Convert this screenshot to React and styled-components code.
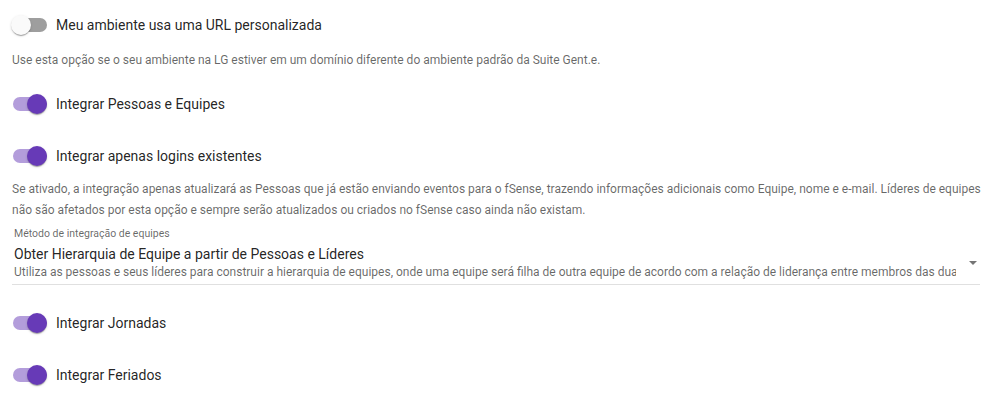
import React from 'react'
import styled, {createGlobalStyle} from 'styled-components'

const Global = createGlobalStyle`
    body {
        margin: 0;
        background: #fff;
        font-family: Roboto, "Noto Sans", sans-serif;
        color: rgba(0,0,0,0.87);
    }
`;

const Page = styled.div`
    width: 998px;
    padding: 0 12px;
    box-sizing: border-box;
    display: flex;
    flex-direction: column;
`;

const Row = styled.label`
    display: flex;
    align-items: center;
    height: 38px;
    margin-top: ${props => props.top || 0}px;
`;

const Track = styled.span`
    position: relative;
    width: 34px;
    height: 14px;
    border-radius: 7px;
    margin-left: 1px;
    background: ${props => props.on ? '#b39ddb' : '#9e9e9e'};
    flex-shrink: 0;
`;

const Thumb = styled.span`
    position: absolute;
    top: -3px;
    left: ${props => props.on ? '14px' : '-2px'};
    width: 20px;
    height: 20px;
    border-radius: 50%;
    background: ${props => props.on ? '#673ab7' : '#fafafa'};
    box-shadow: 0 2px 1px -1px rgba(0,0,0,0.2), 0 1px 1px 0 rgba(0,0,0,0.14), 0 1px 3px 0 rgba(0,0,0,0.12);
`;

const LabelText = styled.span`
    margin-left: 9px;
    font-size: 14px;
`;

const Help = styled.p`
    margin: ${props => props.top || 0}px 0 0;
    font-size: 12px;
    line-height: 21px;
    color: rgba(0,0,0,0.6);
`;

const Select = styled.div`
    position: relative;
    margin-top: 6px;
    width: 968px;
    border-bottom: 1px solid rgba(0,0,0,0.12);
    padding: 0 24px 4px 2px;
    box-sizing: border-box;
`;

const SelectLabel = styled.div`
    font-size: 10.5px;
    color: rgba(0,0,0,0.6);
    line-height: 14px;
`;

const SelectValue = styled.div`
    font-size: 14px;
    line-height: 20px;
    margin-top: 3px;
`;

const SelectSub = styled.div`
    font-size: 12px;
    line-height: 16px;
    color: rgba(0,0,0,0.6);
    white-space: nowrap;
    overflow: hidden;
`;

const Arrow = styled.span`
    position: absolute;
    right: 3px;
    top: 34px;
    width: 0;
    height: 0;
    border-left: 4px solid transparent;
    border-right: 4px solid transparent;
    border-top: 4px solid rgba(0,0,0,0.54);
`;

const Toggle = ({on, label, top}) => (
    <Row top={top}>
        <Track on={on}><Thumb on={on} /></Track>
        <LabelText>{label}</LabelText>
    </Row>
)

const App = () => {
    return (
        <>
            <Global />
            <Page>
                <Toggle top={6} label="Meu ambiente usa uma URL personalizada" />
                <Help top={6}>Use esta opção se o seu ambiente na LG estiver em um domínio diferente do ambiente padrão da Suite Gent.e.</Help>
                <Toggle on top={14} label="Integrar Pessoas e Equipes" />
                <Toggle on top={14} label="Integrar apenas logins existentes" />
                <Help top={4}>
                    Se ativado, a integração apenas atualizará as Pessoas que já estão enviando eventos para o fSense, trazendo informações adicionais como Equipe, nome e e-mail. Líderes de equipes não são afetados por esta opção e sempre serão atualizados ou criados no fSense caso ainda não existam.
                </Help>
                <Select>
                    <SelectLabel>Método de integração de equipes</SelectLabel>
                    <SelectValue>Obter Hierarquia de Equipe a partir de Pessoas e Líderes</SelectValue>
                    <SelectSub>Utiliza as pessoas e seus líderes para construir a hierarquia de equipes, onde uma equipe será filha de outra equipe de acordo com a relação de liderança entre membros das duas equipes.</SelectSub>
                    <Arrow />
                </Select>
                <Toggle on top={19} label="Integrar Jornadas" />
                <Toggle on top={14} label="Integrar Feriados" />
            </Page>
        </>
    )
}

export default App
